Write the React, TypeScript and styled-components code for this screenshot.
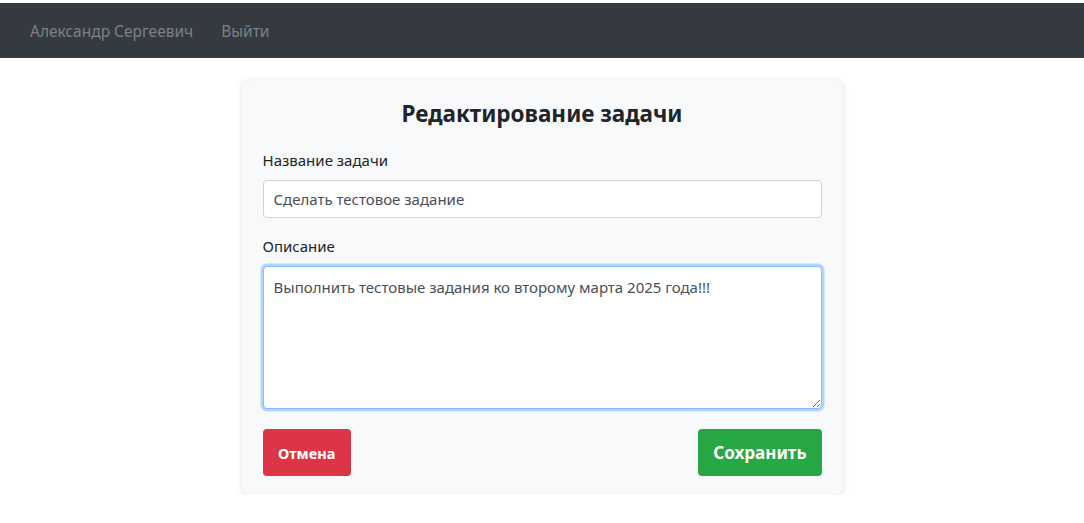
import React from 'react';
import styled, { createGlobalStyle } from 'styled-components';

const GlobalStyle = createGlobalStyle`
  body {
    margin: 0;
    padding-top: 3px;
    background: #ffffff;
    font-family: 'Noto Sans', 'Open Sans', sans-serif;
    color: #212529;
  }
`;

const Navbar = styled.nav`
  display: flex;
  align-items: center;
  gap: 28px;
  height: 55px;
  padding: 0 30px;
  background: #343a40;
`;

const NavLink = styled.a`
  color: #7b8188;
  font-size: 15.5px;
  text-decoration: none;
`;

const Main = styled.main`
  display: flex;
  justify-content: center;
  padding-top: 22px;
`;

const Card = styled.form`
  width: 601px;
  box-sizing: border-box;
  padding: 16px 21px 19px;
  background: #f8f9fa;
  border-radius: 8px;
  box-shadow: 0 1px 6px rgba(0, 0, 0, 0.12);
`;

const Title = styled.h2`
  margin: 0 0 17px;
  text-align: center;
  font-size: 22.5px;
  font-weight: 700;
  line-height: 36px;
  color: #212529;
`;

const Field = styled.div<{ $space: number }>`
  display: flex;
  flex-direction: column;
  margin-bottom: ${(p) => p.$space}px;
`;

const Label = styled.label`
  font-size: 15px;
  line-height: 22px;
  margin-bottom: 9px;
  color: #212529;
`;

const Input = styled.input`
  box-sizing: border-box;
  height: 38px;
  padding: 0 10px;
  font-family: inherit;
  font-size: 15px;
  color: #495057;
  background: #fff;
  border: 1px solid #ced4da;
  border-radius: 4px;
  outline: none;
`;

const TextArea = styled.textarea`
  box-sizing: border-box;
  height: 143px;
  padding: 8px 10px;
  font-family: inherit;
  font-size: 15px;
  line-height: 24px;
  color: #495057;
  background: #fff;
  border: 1px solid #80bdff;
  border-radius: 4px;
  box-shadow: 0 0 0 2.5px rgba(0, 123, 255, 0.28);
  outline: none;
  resize: vertical;
`;

const Actions = styled.div`
  display: flex;
  justify-content: space-between;
  align-items: center;
`;

const Button = styled.button<{ $variant: 'danger' | 'success'; $big?: boolean }>`
  height: 47px;
  padding: 0 ${(p) => (p.$big ? '15px' : '15.5px')};
  border: none;
  border-radius: 4px;
  font-family: inherit;
  font-weight: 700;
  font-size: ${(p) => (p.$big ? '17px' : '14.5px')};
  color: #fff;
  background: ${(p) => (p.$variant === 'danger' ? '#dc3545' : '#28a745')};
  cursor: pointer;
`;

export default function App() {
  return (
    <>
      <GlobalStyle />
      <Navbar>
        <NavLink href="#">Александр Сергеевич</NavLink>
        <NavLink href="#">Выйти</NavLink>
      </Navbar>
      <Main>
        <Card onSubmit={(e) => e.preventDefault()}>
          <Title>Редактирование задачи</Title>
          <Field $space={17}>
            <Label>Название задачи</Label>
            <Input defaultValue="Сделать тестовое задание" />
          </Field>
          <Field $space={20}>
            <Label>Описание</Label>
            <TextArea defaultValue="Выполнить тестовые задания ко второму марта 2025 года!!!" />
          </Field>
          <Actions>
            <Button type="button" $variant="danger">
              Отмена
            </Button>
            <Button type="submit" $variant="success" $big>
              Сохранить
            </Button>
          </Actions>
        </Card>
      </Main>
    </>
  );
}
